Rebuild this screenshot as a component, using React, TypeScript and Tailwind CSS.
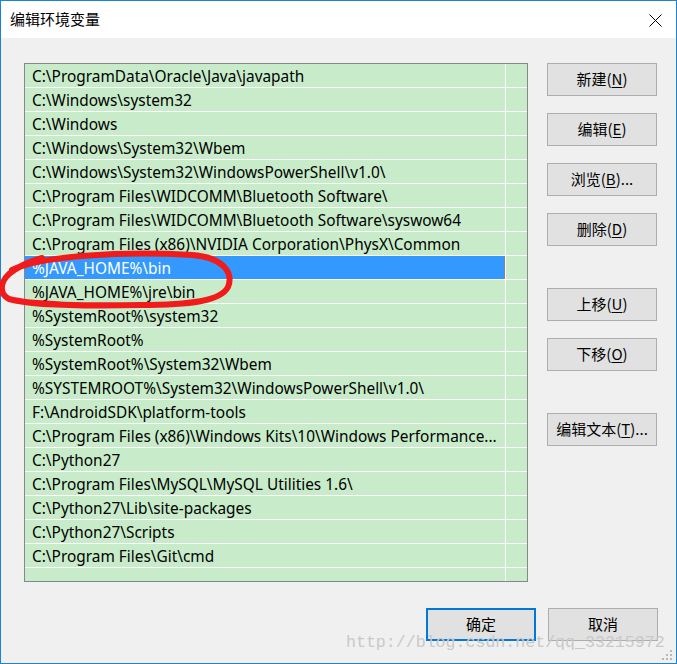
const paths = [
  "C:\\ProgramData\\Oracle\\Java\\javapath",
  "C:\\Windows\\system32",
  "C:\\Windows",
  "C:\\Windows\\System32\\Wbem",
  "C:\\Windows\\System32\\WindowsPowerShell\\v1.0\\",
  "C:\\Program Files\\WIDCOMM\\Bluetooth Software\\",
  "C:\\Program Files\\WIDCOMM\\Bluetooth Software\\syswow64",
  "C:\\Program Files (x86)\\NVIDIA Corporation\\PhysX\\Common",
  "%JAVA_HOME%\\bin",
  "%JAVA_HOME%\\jre\\bin",
  "%SystemRoot%\\system32",
  "%SystemRoot%",
  "%SystemRoot%\\System32\\Wbem",
  "%SYSTEMROOT%\\System32\\WindowsPowerShell\\v1.0\\",
  "F:\\AndroidSDK\\platform-tools",
  "C:\\Program Files (x86)\\Windows Kits\\10\\Windows Performance...",
  "C:\\Python27",
  "C:\\Program Files\\MySQL\\MySQL Utilities 1.6\\",
  "C:\\Python27\\Lib\\site-packages",
  "C:\\Python27\\Scripts",
  "C:\\Program Files\\Git\\cmd",
];

const font = { fontFamily: "'Noto Sans', 'Noto Sans CJK SC', sans-serif" };
const cjk = { fontFamily: "'Noto Sans CJK SC', sans-serif" };

function Btn({ label, hot, tail = "", className = "" }: { label: string; hot: string; tail?: string; className?: string }) {
  return (
    <button
      className={`w-[110px] h-[33px] bg-[#e1e1e1] border border-[#adadad] text-[15px] text-black flex items-center justify-center ${className}`}
    >
      {label}(<span className="underline underline-offset-2">{hot}</span>){tail}
    </button>
  );
}

export default function App() {
  return (
    <div className="relative w-[677px] h-[664px] border border-[#1883d7] flex flex-col bg-[#f0f0f0]" style={font}>
      <div className="h-[37px] bg-white flex items-center justify-between pl-[9px] pr-[14px] shrink-0">
        <span className="text-[15px] text-black" style={cjk}>
          编辑环境变量
        </span>
        <svg width="13" height="13" viewBox="0 0 13 13" className="mt-[1px]">
          <path d="M0.5 0.5 L12.5 12.5 M12.5 0.5 L0.5 12.5" stroke="#000" strokeWidth="1" />
        </svg>
      </div>

      <div className="flex pt-[25px] pl-[23px]">
        <div className="w-[504px] h-[519px] border border-[#828790] bg-[#c8ecca] flex flex-col">
          {paths.map((p, i) => {
            const sel = i === 8;
            return (
              <div key={p} className="flex h-[24px] border-b border-white">
                <div
                  className={`w-[480px] pl-[7px] pt-[3px] text-[15.4px] leading-[20px] whitespace-nowrap overflow-hidden ${
                    sel ? "bg-[#3399ff] text-white border-r border-dotted border-[#e07020]" : "text-black"
                  }`}
                >
                  {p}
                </div>
                <div className="w-[1px] bg-white" />
                <div className="flex-1" />
              </div>
            );
          })}
          <div className="flex flex-1">
            <div className="w-[480px]" />
            <div className="w-[1px] bg-white" />
          </div>
        </div>

        <div className="ml-[19px] flex flex-col" style={cjk}>
          <Btn label="新建" hot="N" />
          <Btn label="编辑" hot="E" className="mt-[17px]" />
          <Btn label="浏览" hot="B" tail="..." className="mt-[17px]" />
          <Btn label="删除" hot="D" className="mt-[17px]" />
          <Btn label="上移" hot="U" className="mt-[42px]" />
          <Btn label="下移" hot="O" className="mt-[17px]" />
          <Btn label="编辑文本" hot="T" tail="..." className="mt-[42px]" />
        </div>
      </div>

      <div className="flex justify-end gap-[12px] pr-[18px] mt-[26px]" style={cjk}>
        <button className="w-[110px] h-[33px] bg-[#e1e1e1] border-2 border-[#0078d7] text-[15px] text-black">确定</button>
        <button className="w-[110px] h-[33px] bg-[#e1e1e1] border border-[#adadad] text-[15px] text-black">取消</button>
      </div>

      <div
        className="absolute left-[345px] top-[632px] text-[16.6px] leading-[20px] text-[#c9c9c9] whitespace-nowrap"
        style={{ fontFamily: "'Liberation Mono', monospace" }}
      >
        http://blog.csdn.net/qq_33215972
      </div>

      <svg className="absolute right-[3px] bottom-[2px]" width="11" height="11" viewBox="0 0 11 11">
        <rect x="8" y="0" width="2" height="2" fill="#b8b8b8" />
        <rect x="4" y="4" width="2" height="2" fill="#b8b8b8" />
        <rect x="8" y="4" width="2" height="2" fill="#b8b8b8" />
        <rect x="0" y="8" width="2" height="2" fill="#b8b8b8" />
        <rect x="4" y="8" width="2" height="2" fill="#b8b8b8" />
        <rect x="8" y="8" width="2" height="2" fill="#b8b8b8" />
      </svg>

      <svg className="absolute left-[-1px] top-[-1px] pointer-events-none" width="677" height="664">
        <path
          d="M12 270 C 40 256, 120 251, 192 255 C 222 257, 234 272, 228 287 C 221 301, 190 305, 140 305 C 90 306, 30 305, 9 299 C -1 294, 0 282, 9 274 C 17 267, 28 262, 42 258"
          fill="none"
          stroke="#f21b1b"
          strokeWidth="6"
          strokeLinecap="round"
        />
      </svg>
    </div>
  );
}
